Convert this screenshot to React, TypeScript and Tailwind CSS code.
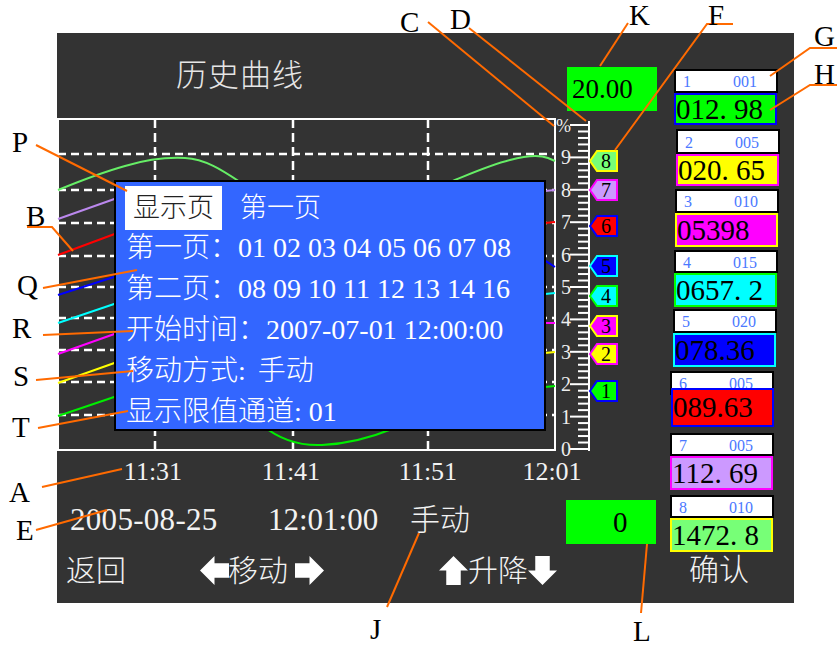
import React from 'react'

const channels = [
  { n: '1', code: '001', value: '012. 98', box: 'ml-[4px] mt-0', head: 'h-[24px]', val: 'h-[32px] bg-[#00ff00] border-[#0000ff]' },
  { n: '2', code: '005', value: '020. 65', box: 'ml-[6px] mt-[4px]', head: 'h-[25px]', val: 'h-[32px] bg-[#ffff00] border-[#ff00ff]' },
  { n: '3', code: '010', value: '05398', box: 'ml-[5px] mt-[3px]', head: 'h-[24px]', val: 'h-[34px] bg-[#ff00ff] border-[#ffff00]' },
  { n: '4', code: '015', value: '0657. 2', box: 'ml-[4px] mt-[3px]', head: 'h-[23px]', val: 'h-[34px] bg-[#00ffff] border-[#00ff00]' },
  { n: '5', code: '020', value: '078.36', box: 'ml-[3px] mt-[2px]', head: 'h-[24px]', val: 'h-[34px] bg-[#0000ff] border-[#00ffff]' },
  { n: '6', code: '005', value: '089.63', box: 'ml-0 mt-[4px]', head: 'h-[24px]', val: 'h-[39px] -mt-[7px] ml-[1px] bg-[#ff0000] border-[#0000ff]' },
  { n: '7', code: '005', value: '112. 69', box: 'ml-0 mt-[6px]', head: 'h-[23px]', val: 'h-[34px] bg-[#cc99ff] border-[#ff00ff]' },
  { n: '8', code: '010', value: '1472. 8', box: 'ml-0 mt-[5px]', head: 'h-[23px]', val: 'h-[34px] bg-[#77ff77] border-[#ffff00]' },
]

// tags on the scale: [label, centre y, fill, stroke]
const tags: [string, number, string, string][] = [
  ['8', 161, '#77ff77', '#ffff00'],
  ['7', 190, '#cc99ff', '#ff00ff'],
  ['6', 226, '#ff0000', '#0000ff'],
  ['5', 266, '#0000ff', '#00ffff'],
  ['4', 296, '#00ffff', '#00ff00'],
  ['3', 326, '#ff00ff', '#ffff00'],
  ['2', 354, '#ffff00', '#ff00ff'],
  ['1', 391, '#00ff00', '#0000ff'],
]

const hLines = [154, 190, 223, 256, 287, 318, 350, 382, 415]
const vLines = [155, 293, 428]

const curves: [string, string][] = [
  ['M58,190 C80,181 100,173 125,166 C145,160 165,157 185,158 C205,159 222,170 240,182', '#66ee66'],
  ['M450,182 C470,174 490,165 510,160 C525,156 540,155 548,158 L555,161', '#66ee66'],
  ['M58,219 L120,197', '#bb88ee'],
  ['M58,255 L120,232', '#ff0000'],
  ['M58,295 L120,275', '#0000ff'],
  ['M58,323 L120,302', '#00ffff'],
  ['M58,354 L120,332', '#ff00ff'],
  ['M58,383 L120,361', '#ffff00'],
  ['M58,416 L120,395', '#00ee00'],
  ['M545,191 L555,190', '#bb88ee'],
  ['M545,223 L555,222', '#ff0000'],
  ['M540,258 Q548,262 555,267', '#0000ff'],
  ['M545,294 L555,293', '#00ffff'],
  ['M545,323 L555,323', '#ff00ff'],
  ['M545,353 L555,352', '#ffff00'],
  ['M545,387 L555,386', '#00ee00'],
  ['M262,425 C280,440 300,446 322,445 C345,444 370,438 392,429', '#00ee00'],
]

// callouts: [label, x, baseline, polyline]
const callouts: [string, number, number, string][] = [
  ['C', 400, 32, '428,22 554,126'],
  ['D', 450, 29, '469,28 586,121'],
  ['K', 629, 25, '628,23 600,66'],
  ['F', 708, 25, '733,24 707,24 615,150'],
  ['G', 814, 46, '837,48 810,48 770,76'],
  ['H', 814, 84, '837,85 810,85 770,110'],
  ['P', 12, 152, '36,145 127,191'],
  ['B', 26, 226, '27,227 52,227 73,251'],
  ['Q', 17, 295, '43,288 137,270'],
  ['R', 12, 338, '43,335 133,331'],
  ['S', 13, 386, '36,380 133,371'],
  ['T', 12, 437, '38,428 128,411'],
  ['A', 9, 502, '42,487 122,469'],
  ['E', 16, 540, '36,530 107,510'],
  ['J', 370, 639, '387,607 419,533'],
  ['L', 633, 641, '641,613 647,544'],
]

function Chart() {
  const ticks = Array.from({ length: 51 }, (_, i) => i)
  return (
    <svg width={563} height={342} viewBox="57 115 563 342" className="block overflow-visible">
      {hLines.map((y) => (
        <line key={y} x1={58} x2={555} y1={y} y2={y} stroke="#fff" strokeWidth={2.5} strokeDasharray="8 5" />
      ))}
      {vLines.map((x) => (
        <line key={x} x1={x} x2={x} y1={119} y2={450} stroke="#fff" strokeWidth={2.5} strokeDasharray="9 5" />
      ))}
      <rect x={58} y={119} width={497} height={331} fill="none" stroke="#fff" strokeWidth={2} />
      {curves.map(([d, c], i) => (
        <path key={i} d={d} fill="none" stroke={c} strokeWidth={2} />
      ))}
      {/* scale */}
      <line x1={589} x2={589} y1={121} y2={451} stroke="#fff" strokeWidth={2} />
      {ticks.map((i) => {
        const y = 449 - i * 6.48
        const major = i % 5 === 0
        return (
          <g key={i}>
            <line x1={major ? 570 : 578} x2={589} y1={y} y2={y} stroke="#fff" strokeWidth={2} />
            {major && (
              <text x={571} y={y + 7} textAnchor="end" fill="#eee" fontSize={i === 50 ? 18 : 20}>
                {i === 50 ? '%' : i / 5}
              </text>
            )}
          </g>
        )
      })}
      {tags.map(([n, c, fill, stroke]) => (
        <g key={n}>
          <polygon
            points={`590,${c} 597,${c - 10} 617,${c - 10} 617,${c + 10} 597,${c + 10}`}
            fill={fill}
            stroke={stroke}
            strokeWidth={2}
          />
          <text x={606} y={c + 7} textAnchor="middle" fill="#000" fontSize={20}>
            {n}
          </text>
        </g>
      ))}
    </svg>
  )
}

function Arrow({ dir }: { dir: 'left' | 'right' | 'up' | 'down' }) {
  const pts = {
    left: '0,14 14,0 14,7 28,7 28,21 14,21 14,28',
    right: '28,14 14,0 14,7 0,7 0,21 14,21 14,28',
    up: '14,0 28,14 21,14 21,28 7,28 7,14 0,14',
    down: '14,28 28,14 21,14 21,0 7,0 7,14 0,14',
  }[dir]
  return (
    <svg width={29} height={29} viewBox="0 0 28 28" className="shrink-0">
      <polygon points={pts} fill="#fff" />
    </svg>
  )
}

export default function App() {
  return (
    <div className="relative w-[838px] h-[646px] overflow-hidden bg-white pt-[33px] pl-[57px] font-['Liberation_Serif','Noto_Sans_CJK_SC',serif]">
      <div className="flex w-[737px] h-[570px] bg-[#333333] text-[#f2f2f2] font-light">
        {/* left part */}
        <div className="w-[613px] flex flex-col">
          <div className="h-[82px] flex items-start">
            <div className="w-[510px] pl-[119px] mt-[27px] text-[31px] leading-[31px] tracking-[1px] text-[#e6e6e6]">历史曲线</div>
            <div className="mt-[34px] w-[90px] h-[44px] bg-[#00ff00] pl-[5px] text-[27px] leading-[44px] text-black font-normal">20.00</div>
          </div>

          <div className="relative h-[342px]">
            <Chart />
            <div className="absolute left-[57px] top-[65px] w-[432px] h-[251px] bg-[#3366ff] border-2 border-black pt-[4px] pl-[9px] text-white">
              <div className="flex items-center">
                <div className="w-[97px] h-[44px] bg-white text-[#222] text-[27px] leading-[44px] text-center">显示页</div>
                <div className="ml-[18px] text-[27px] leading-[44px]">第一页</div>
              </div>
              <div className="-mt-[3px] pl-[1px] text-[28px] leading-[41px] whitespace-nowrap">
                <div>第一页：01 02 03 04 05 06 07 08</div>
                <div>第二页：08 09 10 11 12 13 14 16</div>
                <div>开始时间：2007-07-01 12:00:00</div>
                <div>
                  移动方式:<span className="ml-[12px]">手动</span>
                </div>
                <div>显示限值通道: 01</div>
              </div>
            </div>
          </div>

          <div className="h-[30px] pt-[2px] flex text-[26px] leading-[26px] whitespace-nowrap">
            <div className="ml-[56px] w-[80px] text-center">11:31</div>
            <div className="ml-[58px] w-[80px] text-center">11:41</div>
            <div className="ml-[57px] w-[80px] text-center">11:51</div>
            <div className="ml-[44px] w-[80px] text-center">12:01</div>
          </div>

          <div className="mt-[13px] h-[44px] flex items-start whitespace-nowrap">
            <div className="ml-[13px] w-[198px] text-[31px] leading-[39px] tracking-[0.3px]">2005-08-25</div>
            <div className="w-[142px] text-[31px] leading-[39px]">12:01:00</div>
            <div className="w-[156px] mt-[5px] text-[30px] leading-[30px]">手动</div>
            <div className="w-[90px] h-[44px] bg-[#00ff00] pl-[47px] text-[29px] leading-[44px] text-black font-normal">0</div>
          </div>

          <div className="mt-[11px] h-[31px] flex items-center text-[30px] leading-[30px] whitespace-nowrap">
            <div className="ml-[9px] w-[134px]">返回</div>
            <Arrow dir="left" />
            <span className="ml-[-1px]">移动</span>
            <span className="ml-[7px]"><Arrow dir="right" /></span>
            <span className="ml-[115px]"><Arrow dir="up" /></span>
            <span>升降</span>
            <Arrow dir="down" />
          </div>
        </div>

        {/* right part: channel list */}
        <div className="w-[124px] pt-[36px] flex flex-col">
          {channels.map((ch) => (
            <div key={ch.n} className={`${ch.box} w-[104px] flex flex-col`}>
              <div className={`${ch.head} border-2 border-black bg-white flex items-center pt-[2px] text-[16px] leading-none text-[#4a78ff] font-normal`}>
                <span className="w-[57px] pl-[7px]">{ch.n}</span>
                <span>{ch.code}</span>
              </div>
              <div className={`${ch.val} relative border-2 w-[103px] flex items-center text-[29px] leading-none text-black font-normal whitespace-pre`}>
                {ch.value}
              </div>
            </div>
          ))}
          <div className="mt-[3px] pl-[19px] text-[30px] leading-[30px]">确认</div>
        </div>
      </div>

      {/* callouts */}
      <svg className="absolute inset-0 pointer-events-none" width={838} height={646} viewBox="0 0 838 646">
        {callouts.map(([label, x, y, pts]) => (
          <g key={label}>
            <polyline points={pts} fill="none" stroke="#ff6a00" strokeWidth={2} />
            <text x={x} y={y} fontSize={29} fill="#000">{label}</text>
          </g>
        ))}
      </svg>
    </div>
  )
}
